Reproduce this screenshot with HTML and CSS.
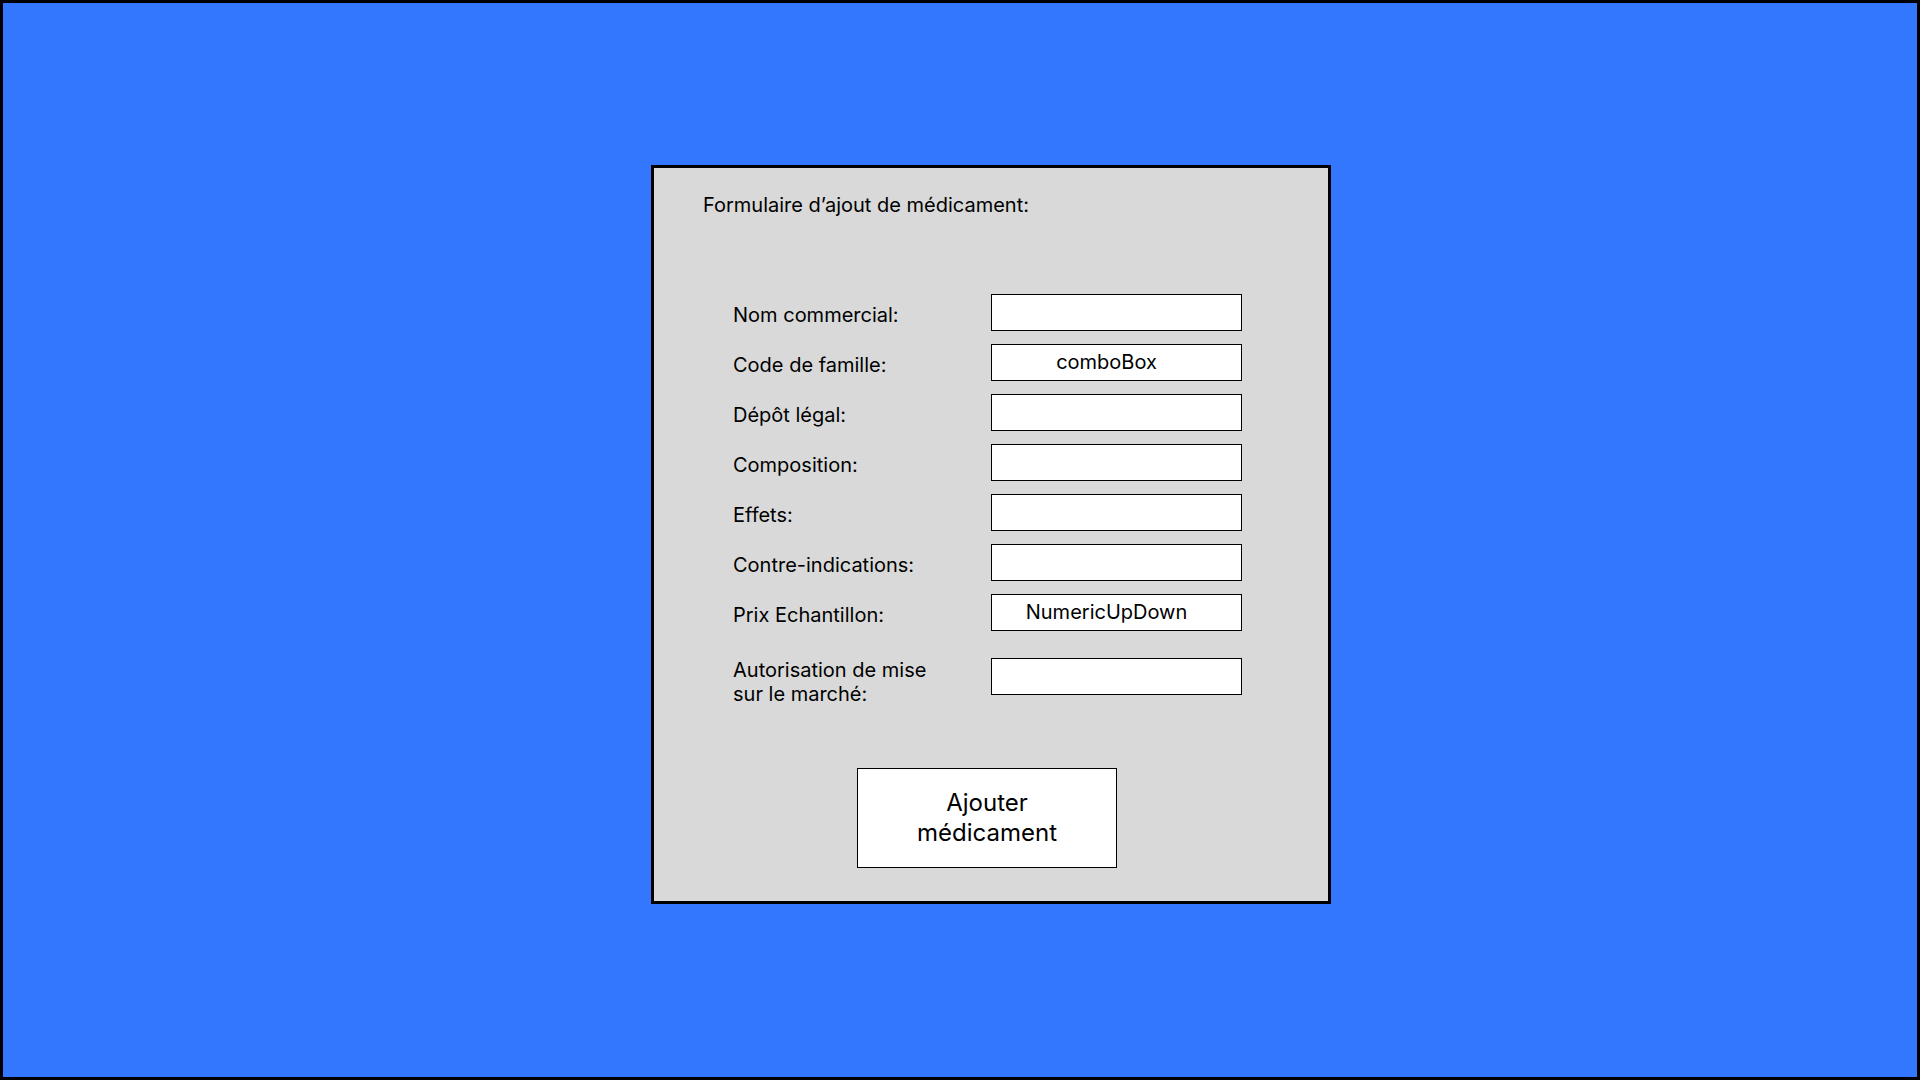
FILE: index.html
```html
<!DOCTYPE html>
<html lang="fr">
<head>
<meta charset="utf-8">
<title>Formulaire d'ajout de médicament</title>
<link rel="stylesheet" href="styles.css">
</head>
<body>
  <div class="panel">
    <div class="title">Formulaire d’ajout de médicament:</div>
    <div class="form">
      <div class="label">Nom commercial:</div>
      <div class="field"></div>
      <div class="label">Code de famille:</div>
      <div class="field">comboBox</div>
      <div class="label">Dépôt légal:</div>
      <div class="field"></div>
      <div class="label">Composition:</div>
      <div class="field"></div>
      <div class="label">Effets:</div>
      <div class="field"></div>
      <div class="label">Contre-indications:</div>
      <div class="field"></div>
      <div class="label">Prix Echantillon:</div>
      <div class="field">NumericUpDown</div>
      <div class="label label-multi">Autorisation de mise<br>sur le marché:</div>
      <div class="field field-last"></div>
    </div>
    <div class="button">Ajouter<br>médicament</div>
  </div>
</body>
</html>
```

FILE: styles.css
```css
html, body {
  margin: 0;
  padding: 0;
}

body {
  box-sizing: border-box;
  width: 1920px;
  height: 1080px;
  border: 3px solid #000;
  background: #3377ff;
  font-family: Inter, "Noto Sans", sans-serif;
  color: #000;
  padding: 162px 0 0 648px;
  overflow: hidden;
}

.panel {
  box-sizing: border-box;
  width: 680px;
  height: 739px;
  background: #d9d9d9;
  border: 3px solid #000;
  padding: 24.7px 0 0 49px;
  display: flex;
  flex-direction: column;
  align-items: flex-start;
}

.title {
  font-size: 20px;
  line-height: 24px;
}

.form {
  margin-top: 77.3px;
  margin-left: 30px;
  display: grid;
  grid-template-columns: 258px 251px;
  row-gap: 13px;
  align-items: start;
}

.label {
  font-size: 20px;
  line-height: 24px;
  padding-top: 9px;
}

.label-multi {
  padding-top: 0;
  margin-top: 14px;
}

.field {
  box-sizing: border-box;
  height: 37px;
  background: #fff;
  border: 1px solid #000;
  font-size: 20px;
  line-height: 34px;
  text-align: center;
  padding-right: 20px;
}

.field-last {
  margin-top: 14px;
}

.button {
  box-sizing: border-box;
  margin-top: 62px;
  margin-left: 154px;
  width: 260px;
  height: 100px;
  background: #fff;
  border: 1px solid #000;
  font-size: 24px;
  line-height: 30px;
  text-align: center;
  display: flex;
  align-items: center;
  justify-content: center;
}
```
